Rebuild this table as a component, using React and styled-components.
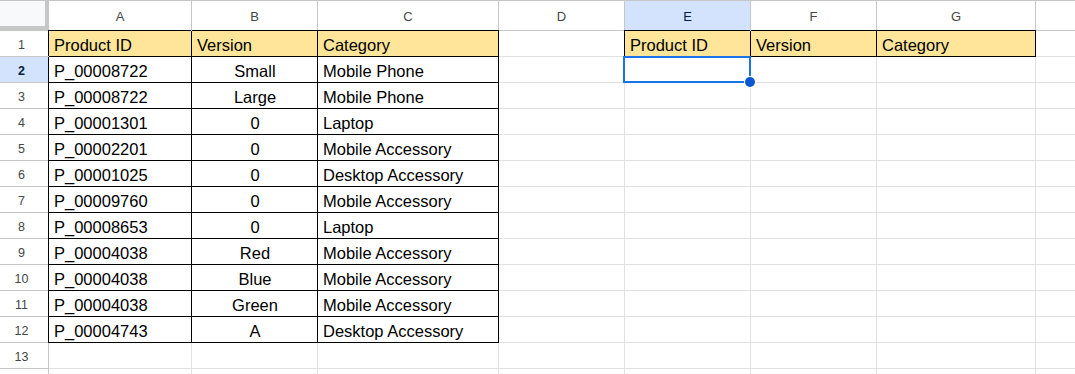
import React from "react";
import styled, { createGlobalStyle, css } from "styled-components";

const GlobalStyle = createGlobalStyle`
  html, body {
    margin: 0;
    padding: 0;
    background: #fff;
    overflow: hidden;
  }
  body {
    font-family: "Liberation Sans", Arial, sans-serif;
  }
`;

const COLS = ["A", "B", "C", "D", "E", "F", "G", "H"];
const WIDTHS = [49, 143, 126, 181, 126, 126, 126, 159, 40];

const rows = [
  ["Product ID", "Version", "Category"],
  ["P_00008722", "Small", "Mobile Phone"],
  ["P_00008722", "Large", "Mobile Phone"],
  ["P_00001301", "0", "Laptop"],
  ["P_00002201", "0", "Mobile Accessory"],
  ["P_00001025", "0", "Desktop Accessory"],
  ["P_00009760", "0", "Mobile Accessory"],
  ["P_00008653", "0", "Laptop"],
  ["P_00004038", "Red", "Mobile Accessory"],
  ["P_00004038", "Blue", "Mobile Accessory"],
  ["P_00004038", "Green", "Mobile Accessory"],
  ["P_00004743", "A", "Desktop Accessory"],
];

const LABELED_ROWS = 13;
const TOTAL_ROWS = 14;

const Sheet = styled.div`
  display: grid;
  grid-template-columns: ${WIDTHS.map((w) => `${w}px`).join(" ")};
  grid-auto-rows: 26px;
  grid-template-rows: 31px;
  width: 1075px;
`;

const Corner = styled.div`
  box-sizing: border-box;
  border-top: 1px solid #c4c7c5;
  border-right: 4px solid #c4c7c5;
  border-bottom: 5px solid #c4c7c5;
  background: #f8f9fa;
`;

const ColHead = styled.div`
  box-sizing: border-box;
  border-top: 1px solid #c4c7c5;
  border-right: 1px solid #c4c7c5;
  border-bottom: 1px solid #c4c7c5;
  background: ${(p) => (p.$active ? "#d3e3fd" : "#fff")};
  color: ${(p) => (p.$active ? "#041e49" : "#444746")};
  font-size: 13px;
  display: flex;
  align-items: center;
  justify-content: center;
  padding-top: 1px;
`;

const RowHead = styled.div`
  box-sizing: border-box;
  border-right: 1px solid #c4c7c5;
  border-bottom: 1px solid #c4c7c5;
  background: ${(p) => (p.$active ? "#d3e3fd" : "#fff")};
  color: ${(p) => (p.$active ? "#041e49" : "#444746")};
  font-weight: ${(p) => (p.$active ? 700 : 400)};
  font-size: 12.5px;
  display: flex;
  align-items: center;
  justify-content: center;
  padding: 2px 5px 0 0;
`;

const Cell = styled.div`
  position: relative;
  box-sizing: border-box;
  border-right: 1px solid #e1e1e1;
  border-bottom: 1px solid #e1e1e1;
  background: #fff;
  color: #000;
  font-size: 16.5px;
  white-space: nowrap;
  display: flex;
  align-items: center;
  padding: 3px 4px 0 5px;
  justify-content: ${(p) => (p.$center ? "center" : "flex-start")};

  ${(p) =>
    p.$header &&
    css`
      background: #ffe599;
    `}

  ${(p) =>
    p.$boxed &&
    css`
      border-right-color: #000;
      border-bottom-color: #000;
    `}

  ${(p) =>
    p.$leftEdge &&
    css`
      box-shadow: -1px 0 0 #000;
    `}

  ${(p) =>
    p.$topEdge &&
    css`
      box-shadow: ${p.$leftEdge ? "-1px -1px 0 #000" : "0 -1px 0 #000"};
    `}
`;

const Selection = styled.div`
  position: absolute;
  left: -2px;
  top: -1px;
  right: -1px;
  bottom: -1px;
  border: 2px solid #1a73e8;
  pointer-events: none;
  z-index: 2;
`;

const Handle = styled.span`
  position: absolute;
  right: -6px;
  bottom: -6px;
  width: 10px;
  height: 10px;
  border-radius: 50%;
  background: #0b57d0;
  box-shadow: 0 0 0 1px #fff;
`;

// header row of the output block at E1:G1
const outputHeader = ["Product ID", "Version", "Category"];

export default function App() {
  const cells = [];

  cells.push(<Corner key="corner" />);
  COLS.forEach((c) =>
    cells.push(
      <ColHead key={`h-${c}`} $active={c === "E"}>
        {c === "H" ? "" : c}
      </ColHead>
    )
  );

  for (let r = 0; r < TOTAL_ROWS; r++) {
    const rowNo = r + 1;
    cells.push(
      <RowHead key={`r-${rowNo}`} $active={rowNo === 2}>
        {rowNo <= LABELED_ROWS ? rowNo : ""}
      </RowHead>
    );
    COLS.forEach((c, ci) => {
      const key = `${c}${rowNo}`;
      const data = rows[r];
      if (data && ci < 3) {
        cells.push(
          <Cell
            key={key}
            $boxed
            $header={r === 0}
            $center={ci === 1 && r > 0}
            $leftEdge={ci === 0}
            $topEdge={r === 0}
          >
            {data[ci]}
          </Cell>
        );
      } else if (r === 0 && ci >= 4 && ci <= 6) {
        cells.push(
          <Cell
            key={key}
            $boxed
            $header
            $leftEdge={ci === 4}
            $topEdge
          >
            {outputHeader[ci - 4]}
          </Cell>
        );
      } else if (key === "E2") {
        cells.push(
          <Cell key={key}>
            <Selection>
              <Handle />
            </Selection>
          </Cell>
        );
      } else {
        cells.push(<Cell key={key} />);
      }
    });
  }

  return (
    <>
      <GlobalStyle />
      <Sheet>{cells}</Sheet>
    </>
  );
}
